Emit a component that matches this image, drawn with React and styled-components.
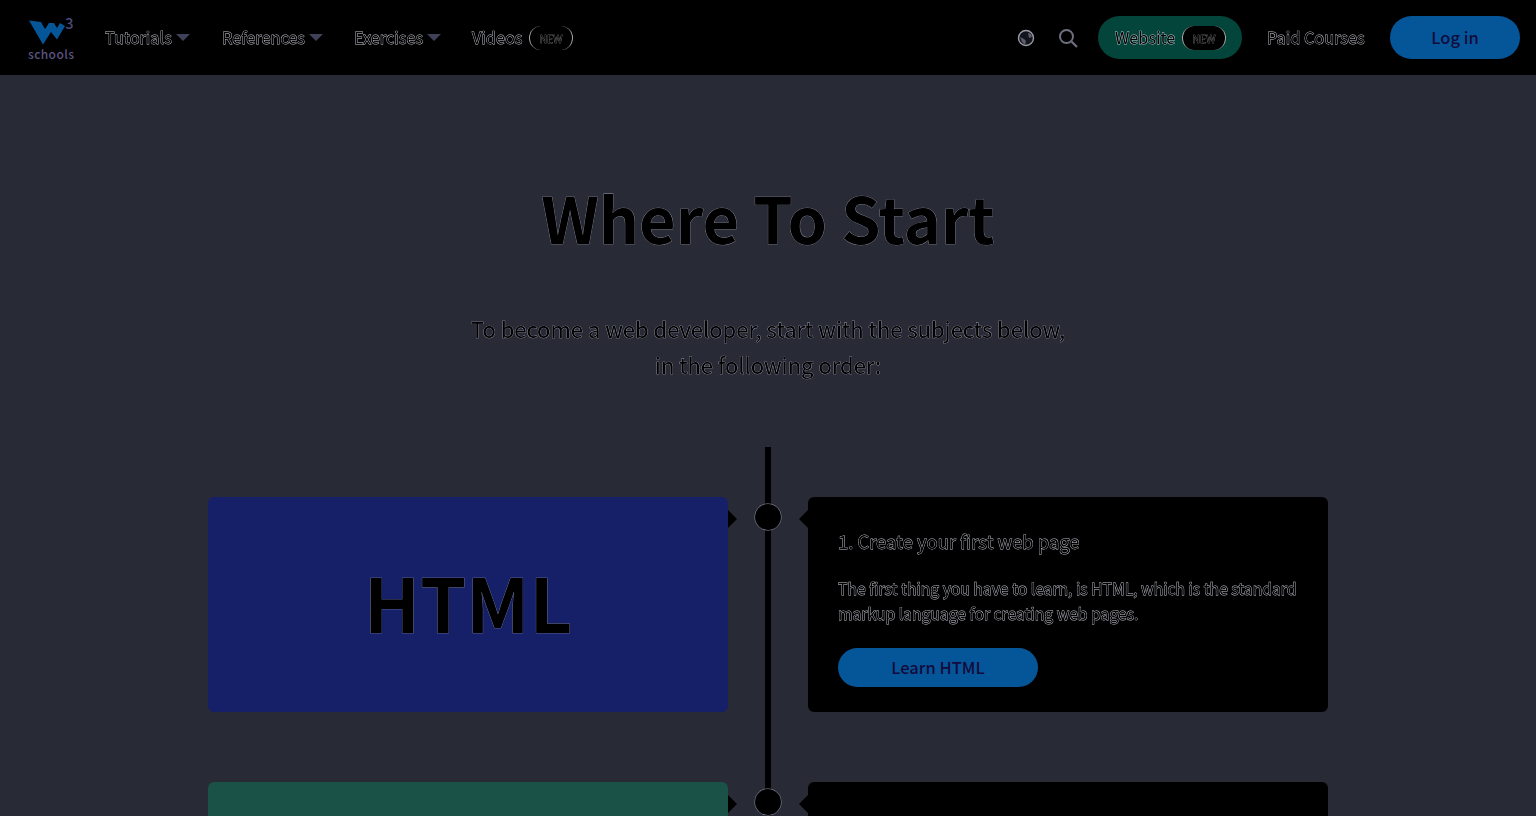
import React from "react";
import styled, { createGlobalStyle, css } from "styled-components";

const outlined = css`
  color: #000;
  -webkit-text-stroke: 0.8px #c4c6d0;
  paint-order: stroke fill;
  will-change: transform;
`;

const GlobalStyle = createGlobalStyle`
  html, body {
    margin: 0;
    height: 816px;
    overflow: hidden;
    background: #282a35;
    font-family: "Noto Sans CJK SC", "Noto Sans", sans-serif;
  }
  * { box-sizing: border-box; }
`;

const Topbar = styled.header`
  height: 75px;
  background: #000;
  display: flex;
  align-items: center;
  padding: 0 16px 0 28px;
`;

const Logo = styled.svg`
  width: 50px;
  height: 54px;
  margin-right: 27px;
  flex: none;
`;

const NavLink = styled.a`
  display: flex;
  align-items: center;
  gap: 4px;
  margin-right: ${(props) => props.$gap || 0}px;
`;

const NavLabel = styled.span`
  ${outlined}
  font-size: 16.3px;
  line-height: 1;
`;

const Caret = styled.span`
  width: 0;
  height: 0;
  margin-top: 1px;
  border-left: 7px solid transparent;
  border-right: 7px solid transparent;
  border-top: 7px solid #3f4158;
`;

const NewBadge = styled.span`
  ${outlined}
  width: 44px;
  height: 24px;
  margin-left: ${(props) => props.$offset}px;
  display: flex;
  align-items: center;
  justify-content: center;
  border-radius: 12px;
  border-left: 1px solid #aaa;
  border-right: 1px solid #aaa;
  background: #000;
  font-size: 10.5px;
  -webkit-text-stroke: 0.5px #aaa;
`;

const Spacer = styled.div`
  flex: 1;
`;

const IconButton = styled.svg`
  width: 20px;
  height: 20px;
  margin-right: ${(props) => props.$gap}px;
  flex: none;
`;

const Pill = styled.a`
  height: 43px;
  width: ${(props) => props.$width}px;
  margin-right: ${(props) => props.$gap || 0}px;
  border-radius: 22px;
  background: ${(props) => props.$bg};
  display: flex;
  align-items: center;
  justify-content: center;
`;

const LoginLabel = styled.span`
  color: #140a3c;
  font-size: 16.5px;
  font-weight: 500;
  margin-bottom: 2px;
`;

const Hero = styled.section`
  padding-top: 102px;
  text-align: center;
`;

const Title = styled.h1`
  ${outlined}
  margin: 0;
  font-size: 63px;
  line-height: 80px;
  font-weight: 700;
  -webkit-text-stroke: 0.6px #9a9cab;
`;

const Lead = styled.p`
  ${outlined}
  margin: 53px 0 0;
  font-size: 22px;
  line-height: 36px;
  -webkit-text-stroke: 0.65px #a8aab8;
`;

const Timeline = styled.div`
  position: relative;
  width: 1120px;
  margin: 65px auto 0;
  padding-top: 50px;
  display: flex;
  flex-direction: column;
  gap: 70px;

  &::before {
    content: "";
    position: absolute;
    top: 0;
    bottom: 0;
    left: 557px;
    width: 6px;
    background: #000;
  }
`;

const Row = styled.div`
  position: relative;
  display: grid;
  grid-template-columns: 520px 520px;
  justify-content: space-between;

  &::after {
    content: "";
    position: absolute;
    top: 7px;
    left: 547px;
    width: 26px;
    height: 26px;
    border-radius: 50%;
    background: #000;
    box-shadow: 0 0 0 0.5px #8f91a3;
  }
`;

const Banner = styled.div`
  position: relative;
  height: 215px;
  border-radius: 6px;
  background: ${(props) => props.$bg};
  display: flex;
  align-items: center;
  justify-content: center;

  &::after {
    content: "";
    position: absolute;
    top: 13px;
    right: -9px;
    border-top: 9px solid transparent;
    border-bottom: 9px solid transparent;
    border-left: 9px solid #000;
  }
`;

const BannerTitle = styled.h2`
  ${outlined}
  margin: 0 0 8px;
  font-size: 74px;
  font-weight: 700;
  -webkit-text-stroke: 0.6px #8f91a3;
`;

const Card = styled.div`
  position: relative;
  height: 215px;
  border-radius: 6px;
  background: #000;
  padding: 31px 20px 0 30px;

  &::before {
    content: "";
    position: absolute;
    top: 13px;
    left: -9px;
    border-top: 9px solid transparent;
    border-bottom: 9px solid transparent;
    border-right: 9px solid #000;
  }
`;

const CardTitle = styled.h3`
  ${outlined}
  margin: -1px 0 1px;
  font-size: 18.4px;
  line-height: 28px;
  font-weight: 400;
`;

const CardText = styled.p`
  ${outlined}
  margin: 21px 0 0;
  font-size: 15.7px;
  line-height: 25px;
`;

const LearnButton = styled.a`
  margin-top: 22px;
  padding-bottom: 2px;
  width: 200px;
  height: 39px;
  border-radius: 20px;
  background: #055698;
  color: #140a3c;
  font-size: 16.5px;
  font-weight: 500;
  display: flex;
  align-items: center;
  justify-content: center;
`;

const steps = [
  {
    name: "HTML",
    bg: "#152068",
    title: "1. Create your first web page",
    text: "The first thing you have to learn, is HTML, which is the standard markup language for creating web pages.",
    link: "Learn HTML",
  },
  { name: "", bg: "#1a5248", title: "", text: "", link: "" },
];

export default function App() {
  return (
    <>
      <GlobalStyle />
      <Topbar>
        <Logo viewBox="0 -4 50 54">
          <path d="M1 5.5L13 7l4 7 4-6h5l3 5 3-5 5 3-8 13.5-6-7.5-8 12.5z" fill="#055698" />
          <text x="37" y="13.5" fontSize="15" fontWeight="500" fill="#4c4a78" fontFamily="Noto Sans CJK SC">3</text>
          <text x="0" y="43.5" fontSize="12" fontWeight="500" fill="#5a5480" fontFamily="Noto Sans CJK SC" letterSpacing="0.4">schools</text>
        </Logo>
        <NavLink $gap={32}><NavLabel>Tutorials</NavLabel><Caret /></NavLink>
        <NavLink $gap={31}><NavLabel>References</NavLabel><Caret /></NavLink>
        <NavLink $gap={31}><NavLabel>Exercises</NavLabel><Caret /></NavLink>
        <NavLink><NavLabel>Videos</NavLabel><NewBadge $offset={3}>NEW</NewBadge></NavLink>
        <Spacer />
        <IconButton viewBox="0 0 20 20" $gap={22}>
          <circle cx="10" cy="10" r="7.5" fill="#14151c" stroke="#9a9ba6" strokeWidth="1.4" />
          <path d="M4 9l4 2 2 2-1 4-3-3zM12 5l3 1 1 3-3 1z" fill="#5c5d6c" />
        </IconButton>
        <IconButton viewBox="0 0 20 20" $gap={20}>
          <circle cx="8.5" cy="8.5" r="6.5" fill="none" stroke="#6e7080" strokeWidth="2" />
          <path d="M13.5 13.5l5.5 5.5" stroke="#6e7080" strokeWidth="2.2" />
        </IconButton>
        <Pill $bg="#04453b" $width={144} $gap={25}>
          <NavLabel>Website</NavLabel>
          <NewBadge $offset={7}>NEW</NewBadge>
        </Pill>
        <NavLink $gap={25}><NavLabel>Paid Courses</NavLabel></NavLink>
        <Pill $bg="#055698" $width={130}>
          <LoginLabel>Log in</LoginLabel>
        </Pill>
      </Topbar>
      <Hero>
        <Title>Where To Start</Title>
        <Lead>
          To become a web developer, start with the subjects below,
          <br />
          in the following order:
        </Lead>
      </Hero>
      <Timeline>
        {steps.map((step, i) => (
          <Row key={i}>
            <Banner $bg={step.bg}>
              {step.name && <BannerTitle>{step.name}</BannerTitle>}
            </Banner>
            <Card>
              {step.title && <CardTitle>{step.title}</CardTitle>}
              {step.text && <CardText>{step.text}</CardText>}
              {step.link && <LearnButton>{step.link}</LearnButton>}
            </Card>
          </Row>
        ))}
      </Timeline>
    </>
  );
}
